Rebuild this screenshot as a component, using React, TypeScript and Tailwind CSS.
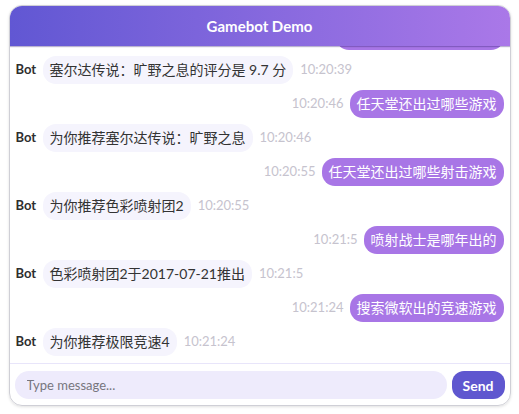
import React, { useState } from 'react';

interface Msg {
  id: number;
  from: 'bot' | 'user';
  text: string;
  time: string;
}

const MESSAGES: Msg[] = [
  { id: 0, from: 'user', text: '塞尔达传说旷野之息评分', time: '10:20:39' },
  { id: 1, from: 'bot', text: '塞尔达传说：旷野之息的评分是 9.7 分', time: '10:20:39' },
  { id: 2, from: 'user', text: '任天堂还出过哪些游戏', time: '10:20:46' },
  { id: 3, from: 'bot', text: '为你推荐塞尔达传说：旷野之息', time: '10:20:46' },
  { id: 4, from: 'user', text: '任天堂还出过哪些射击游戏', time: '10:20:55' },
  { id: 5, from: 'bot', text: '为你推荐色彩喷射团2', time: '10:20:55' },
  { id: 6, from: 'user', text: '喷射战士是哪年出的', time: '10:21:5' },
  { id: 7, from: 'bot', text: '色彩喷射团2于2017-07-21推出', time: '10:21:5' },
  { id: 8, from: 'user', text: '搜索微软出的竞速游戏', time: '10:21:24' },
  { id: 9, from: 'bot', text: '为你推荐极限竞速4', time: '10:21:24' },
];

const FONT = "font-['Lato','Noto_Sans_CJK_SC',sans-serif]";

function Row({ msg }: { msg: Msg }) {
  if (msg.from === 'bot') {
    return (
      <div className="flex items-center">
        <span className="w-[27px] text-[13px] font-bold text-[#2e2e2e]">Bot</span>
        <div className="bg-[#f5f4fd] text-[#333] text-[14px] leading-[18px] px-[7px] py-[5px] rounded-[13px]">
          {msg.text}
        </div>
        <span className="ml-[7px] text-[13px] text-[#c6c3ce]">{msg.time}</span>
      </div>
    );
  }
  return (
    <div className="flex items-center justify-end">
      <span className="mr-[6px] text-[13px] text-[#c6c3ce]">{msg.time}</span>
      <div className="bg-[#a876e6] text-white text-[14px] leading-[18px] px-[7px] py-[5px] rounded-[13px]">
        {msg.text}
      </div>
    </div>
  );
}

export default function App() {
  const [draft, setDraft] = useState('');

  return (
    <div className={`${FONT} w-full h-[414px] bg-white pt-[5px]`}>
      <div className="mx-auto w-[502px] h-[401px] flex flex-col border border-[#cfcfd6] rounded-[13px] overflow-hidden shadow-[0_1px_3px_rgba(0,0,0,0.12)]">
        <div className="h-[40px] shrink-0 flex items-center justify-center bg-gradient-to-r from-[#6157d3] to-[#aa78e8] text-white text-[15px] font-bold shadow-[0_1px_1px_rgba(60,40,120,0.35)] relative z-10">
          Gamebot Demo
        </div>

        <div className="flex-1 min-h-0 overflow-hidden flex flex-col justify-end gap-[6px] px-[6px] pb-[7px]">
          {MESSAGES.map((m) => (
            <Row key={m.id} msg={m} />
          ))}
        </div>

        <div className="shrink-0 border-t border-[#e8e5fa] flex items-center gap-[5px] px-[5px] pt-[7px] pb-[6px]">
          <input
            value={draft}
            onChange={(e) => setDraft(e.target.value)}
            placeholder="Type message..."
            className="flex-1 h-[28px] rounded-full bg-[#eeebfc] px-3 text-[13px] text-[#333] placeholder:text-[#77767e] outline-none"
          />
          <button className="w-[53px] h-[28px] rounded-[12px] bg-[#5f57cf] text-white text-[14px] font-bold">
            Send
          </button>
        </div>
      </div>
    </div>
  );
}
